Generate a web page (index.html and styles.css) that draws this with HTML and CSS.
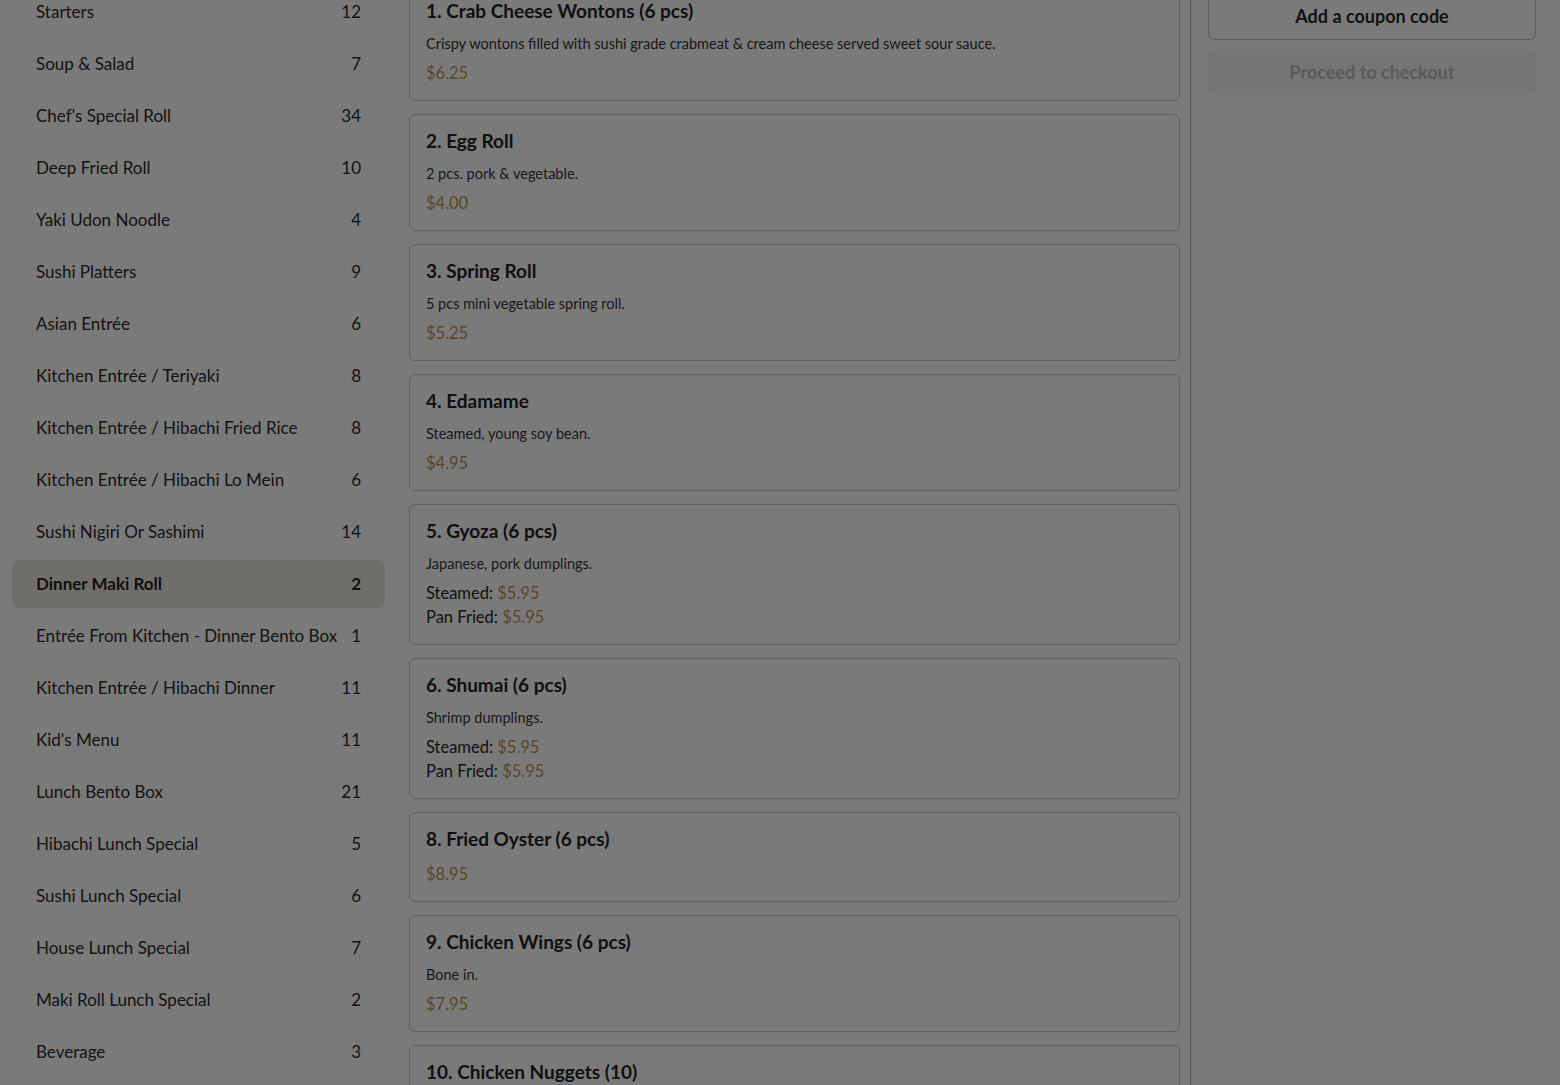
FILE: index.html
```html
<!DOCTYPE html>
<html lang="en">
<head>
<meta charset="utf-8">
<title>Menu</title>
<link rel="stylesheet" href="styles.css">
</head>
<body>
<div class="page">
  <nav class="sidebar">
    <a class="cat"><span>Starters</span><span>12</span></a>
    <a class="cat"><span>Soup &amp; Salad</span><span>7</span></a>
    <a class="cat"><span>Chef's Special Roll</span><span>34</span></a>
    <a class="cat"><span>Deep Fried Roll</span><span>10</span></a>
    <a class="cat"><span>Yaki Udon Noodle</span><span>4</span></a>
    <a class="cat"><span>Sushi Platters</span><span>9</span></a>
    <a class="cat"><span>Asian Entrée</span><span>6</span></a>
    <a class="cat"><span>Kitchen Entrée / Teriyaki</span><span>8</span></a>
    <a class="cat"><span>Kitchen Entrée / Hibachi Fried Rice</span><span>8</span></a>
    <a class="cat"><span>Kitchen Entrée / Hibachi Lo Mein</span><span>6</span></a>
    <a class="cat"><span>Sushi Nigiri Or Sashimi</span><span>14</span></a>
    <a class="cat active"><span>Dinner Maki Roll</span><span>2</span></a>
    <a class="cat"><span>Entrée From Kitchen - Dinner Bento Box</span><span>1</span></a>
    <a class="cat"><span>Kitchen Entrée / Hibachi Dinner</span><span>11</span></a>
    <a class="cat"><span>Kid's Menu</span><span>11</span></a>
    <a class="cat"><span>Lunch Bento Box</span><span>21</span></a>
    <a class="cat"><span>Hibachi Lunch Special</span><span>5</span></a>
    <a class="cat"><span>Sushi Lunch Special</span><span>6</span></a>
    <a class="cat"><span>House Lunch Special</span><span>7</span></a>
    <a class="cat"><span>Maki Roll Lunch Special</span><span>2</span></a>
    <a class="cat"><span>Beverage</span><span>3</span></a>
  </nav>

  <main class="items">
    <div class="card">
      <h3 class="title">1. Crab Cheese Wontons (6 pcs)</h3>
      <p class="desc">Crispy wontons filled with sushi grade crabmeat &amp; cream cheese served sweet sour sauce.</p>
      <div class="price">$6.25</div>
    </div>
    <div class="card">
      <h3 class="title">2. Egg Roll</h3>
      <p class="desc">2 pcs. pork &amp; vegetable.</p>
      <div class="price">$4.00</div>
    </div>
    <div class="card">
      <h3 class="title">3. Spring Roll</h3>
      <p class="desc">5 pcs mini vegetable spring roll.</p>
      <div class="price">$5.25</div>
    </div>
    <div class="card">
      <h3 class="title">4. Edamame</h3>
      <p class="desc">Steamed, young soy bean.</p>
      <div class="price">$4.95</div>
    </div>
    <div class="card">
      <h3 class="title">5. Gyoza (6 pcs)</h3>
      <p class="desc">Japanese, pork dumplings.</p>
      <div class="price"><span class="opt">Steamed:</span> $5.95</div>
      <div class="price"><span class="opt">Pan Fried:</span> $5.95</div>
    </div>
    <div class="card">
      <h3 class="title">6. Shumai (6 pcs)</h3>
      <p class="desc">Shrimp dumplings.</p>
      <div class="price"><span class="opt">Steamed:</span> $5.95</div>
      <div class="price"><span class="opt">Pan Fried:</span> $5.95</div>
    </div>
    <div class="card">
      <h3 class="title">8. Fried Oyster (6 pcs)</h3>
      <div class="price">$8.95</div>
    </div>
    <div class="card">
      <h3 class="title">9. Chicken Wings (6 pcs)</h3>
      <p class="desc">Bone in.</p>
      <div class="price">$7.95</div>
    </div>
    <div class="card">
      <h3 class="title">10. Chicken Nuggets (10)</h3>
    </div>
  </main>

  <aside class="cart">
    <button class="btn coupon">Add a coupon code</button>
    <button class="btn checkout" disabled>Proceed to checkout</button>
  </aside>
</div>
<div class="backdrop"></div>
</body>
</html>
```

FILE: styles.css
```css
* { box-sizing: border-box; }

html, body {
  margin: 0;
  padding: 0;
  background: #ffffff;
  overflow: hidden;
}

body {
  font-family: "Lato", "Noto Sans", "Liberation Sans", sans-serif;
  color: #2b2b2b;
  height: 1085px;
}

.page {
  display: flex;
  align-items: flex-start;
  padding-left: 12px;
  margin-top: -16px;
}

/* Sidebar */
.sidebar {
  flex: 0 0 373px;
  display: flex;
  flex-direction: column;
  gap: 4px;
  padding-top: 4px;
}

.cat {
  display: flex;
  align-items: center;
  justify-content: space-between;
  gap: 8px;
  height: 48px;
  padding: 0 24px 2px;
  border-radius: 8px;
  font-size: 17px;
  color: #2a2a2a;
  white-space: nowrap;
  cursor: pointer;
}

.cat.active {
  background: #ebe5de;
  font-weight: 700;
  color: #232323;
}

/* Items */
.items {
  flex: 0 0 771px;
  display: flex;
  flex-direction: column;
  gap: 13px;
  margin-left: 24px;
}

.card {
  border: 1px solid #c6c6c6;
  border-radius: 6px;
  padding: 14px 16px 15px;
  background: #ffffff;
}

.title {
  margin: 0 0 11px;
  font-size: 19px;
  line-height: 24px;
  font-weight: 700;
  color: #232323;
}

.desc {
  margin: 0 0 7px;
  font-size: 14.5px;
  line-height: 20px;
  color: #363636;
}

.price {
  font-size: 16.5px;
  line-height: 24px;
  color: #b89660;
}

.opt {
  color: #262626;
}

/* Cart */
.cart {
  flex: 1 1 auto;
  align-self: stretch;
  margin-left: 10px;
  border-left: 1px solid #b0b0b0;
  padding: 8px 24px 0 17px;
  display: flex;
  flex-direction: column;
  gap: 9px;
  min-height: 1110px;
}

.btn {
  font-family: inherit;
  height: 46px;
  border-radius: 6px;
  font-size: 18px;
  font-weight: 700;
}

.coupon {
  height: 48px;
  background: #ffffff;
  border: 1px solid #c9c9c9;
  color: #262626;
}

.checkout {
  background: #f5f5f5;
  border: none;
  color: #bdbdbd;
}

/* Modal backdrop covering the page */
.backdrop {
  position: fixed;
  inset: 0;
  background: rgba(0, 0, 0, 0.52);
}
```
